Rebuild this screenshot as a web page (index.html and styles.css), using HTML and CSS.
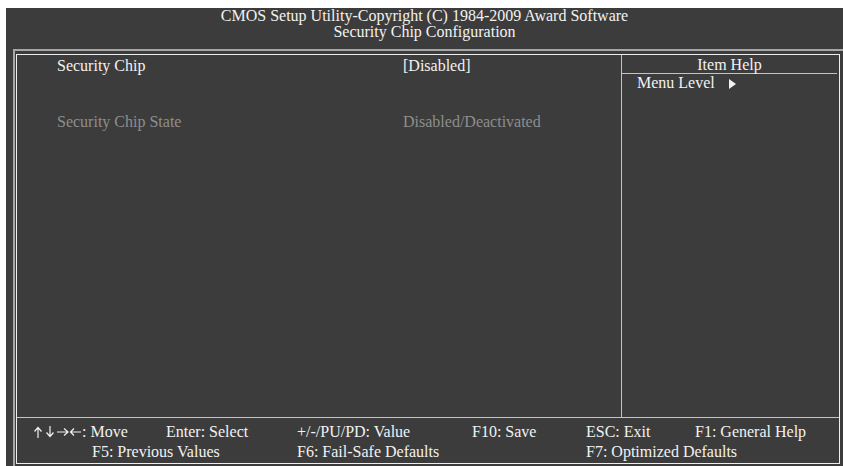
FILE: index.html
```html
<!DOCTYPE html>
<html lang="en">
<head>
    <meta charset="UTF-8">
    <title>Security Chip Configuration</title>
    <link rel="stylesheet" href="styles.css">
</head>
<body>
    <div class="screen">
        <div class="title">
            <div>CMOS Setup Utility-Copyright (C) 1984-2009 Award Software</div>
            <div>Security Chip Configuration</div>
        </div>
        <div class="frame">
            <div class="box">
                <div class="main">
                    <div class="items">
                        <div class="row">
                            <span class="label">Security Chip</span>
                            <span class="value">[Disabled]</span>
                        </div>
                        <div class="row dim state">
                            <span class="label">Security Chip State</span>
                            <span class="value">Disabled/Deactivated</span>
                        </div>
                    </div>
                    <div class="help">
                        <div class="help-title">Item Help</div>
                        <div class="menu-level">Menu Level
                            <svg class="tri" width="7" height="10" viewBox="0 0 7 10"><path d="M0 0 L7 5 L0 10 Z" fill="#f2f2f2"/></svg>
                        </div>
                    </div>
                </div>
                <div class="footer">
                    <div class="keys top">
                        <span><svg class="arrows" width="48" height="12" viewBox="0 0 48 12" fill="none" stroke="#f2f2f2" stroke-width="1.2">
                            <path d="M5 12 V1.5 M1.5 5.5 L5 1.5 L8.5 5.5"/>
                            <path d="M17 0 V10.5 M13.5 6.5 L17 10.5 L20.5 6.5"/>
                            <path d="M24 6 H35 M31 2.5 L35 6 L31 9.5"/>
                            <path d="M37 6 H48 M41 2.5 L37.5 6 L41 9.5"/>
                        </svg>: Move</span>
                        <span>Enter: Select</span>
                        <span>+/-/PU/PD: Value</span>
                        <span>F10: Save</span>
                        <span>ESC: Exit</span>
                        <span>F1: General Help</span>
                    </div>
                    <div class="keys bottom">
                        <span>F5: Previous Values</span>
                        <span>F6: Fail-Safe Defaults</span>
                        <span>F7: Optimized Defaults</span>
                    </div>
                </div>
            </div>
        </div>
    </div>
</body>
</html>
```
FILE: styles.css
```css
:root {
    --bg: #3c3c3c;
    --text: #f2f2f2;
    --dim: #8e8e8e;
    --frame: #a6a6a6;
    --edge: #ededed;
    --rule: #c4c4c4;
}

body {
    margin: 0;
    background: #ffffff;
    font-family: "Liberation Serif", "Times New Roman", serif;
    font-size: 16px;
    color: var(--text);
}
.screen {
    margin: 8px 0 0 6px;
    width: 837px;
    height: 458px;
    background: var(--bg);
    display: flex;
    flex-direction: column;
}
.title {
    height: 41px;
    line-height: 16px;
    text-align: center;
}
.frame {
    flex: 1;
    margin-left: 7px;
    border-top: 2px solid var(--frame);
    border-left: 2px solid var(--frame);
    padding: 3px 0 0 1px;
}
.box {
    width: 822px;
    height: 408px;
    border: 1px solid var(--edge);
    display: flex;
    flex-direction: column;
}
.main {
    height: 362px;
    display: flex;
    border-bottom: 1px solid var(--rule);
}
.items {
    width: 564px;
    padding: 1px 0 0 40px;
    border-right: 1px solid var(--rule);
}
.row {
    display: flex;
    line-height: 19px;
}
.row .label {
    width: 346px;
}
.state {
    margin-top: 37px;
}
.dim {
    color: var(--dim);
}
.help {
    flex: 1;
}
.help-title {
    text-align: center;
    padding-top: 1px;
    line-height: 17px;
    border-bottom: 1px solid var(--rule);
    margin-right: 2px;
}
.menu-level {
    padding-left: 15px;
    line-height: 17px;
}
.tri {
    margin-left: 10px;
    vertical-align: -1px;
}
.footer {
    flex: 1;
    padding-top: 4px;
}
.keys {
    display: grid;
    line-height: 20px;
    white-space: nowrap;
}
.arrows {
    vertical-align: -1px;
    margin-right: 1px;
}
.keys.top {
    grid-template-columns: 133px 131px 175px 114px 109px auto;
    padding-left: 16px;
}
.keys.bottom {
    grid-template-columns: 205px 289px auto;
    padding-left: 75px;
}
```
